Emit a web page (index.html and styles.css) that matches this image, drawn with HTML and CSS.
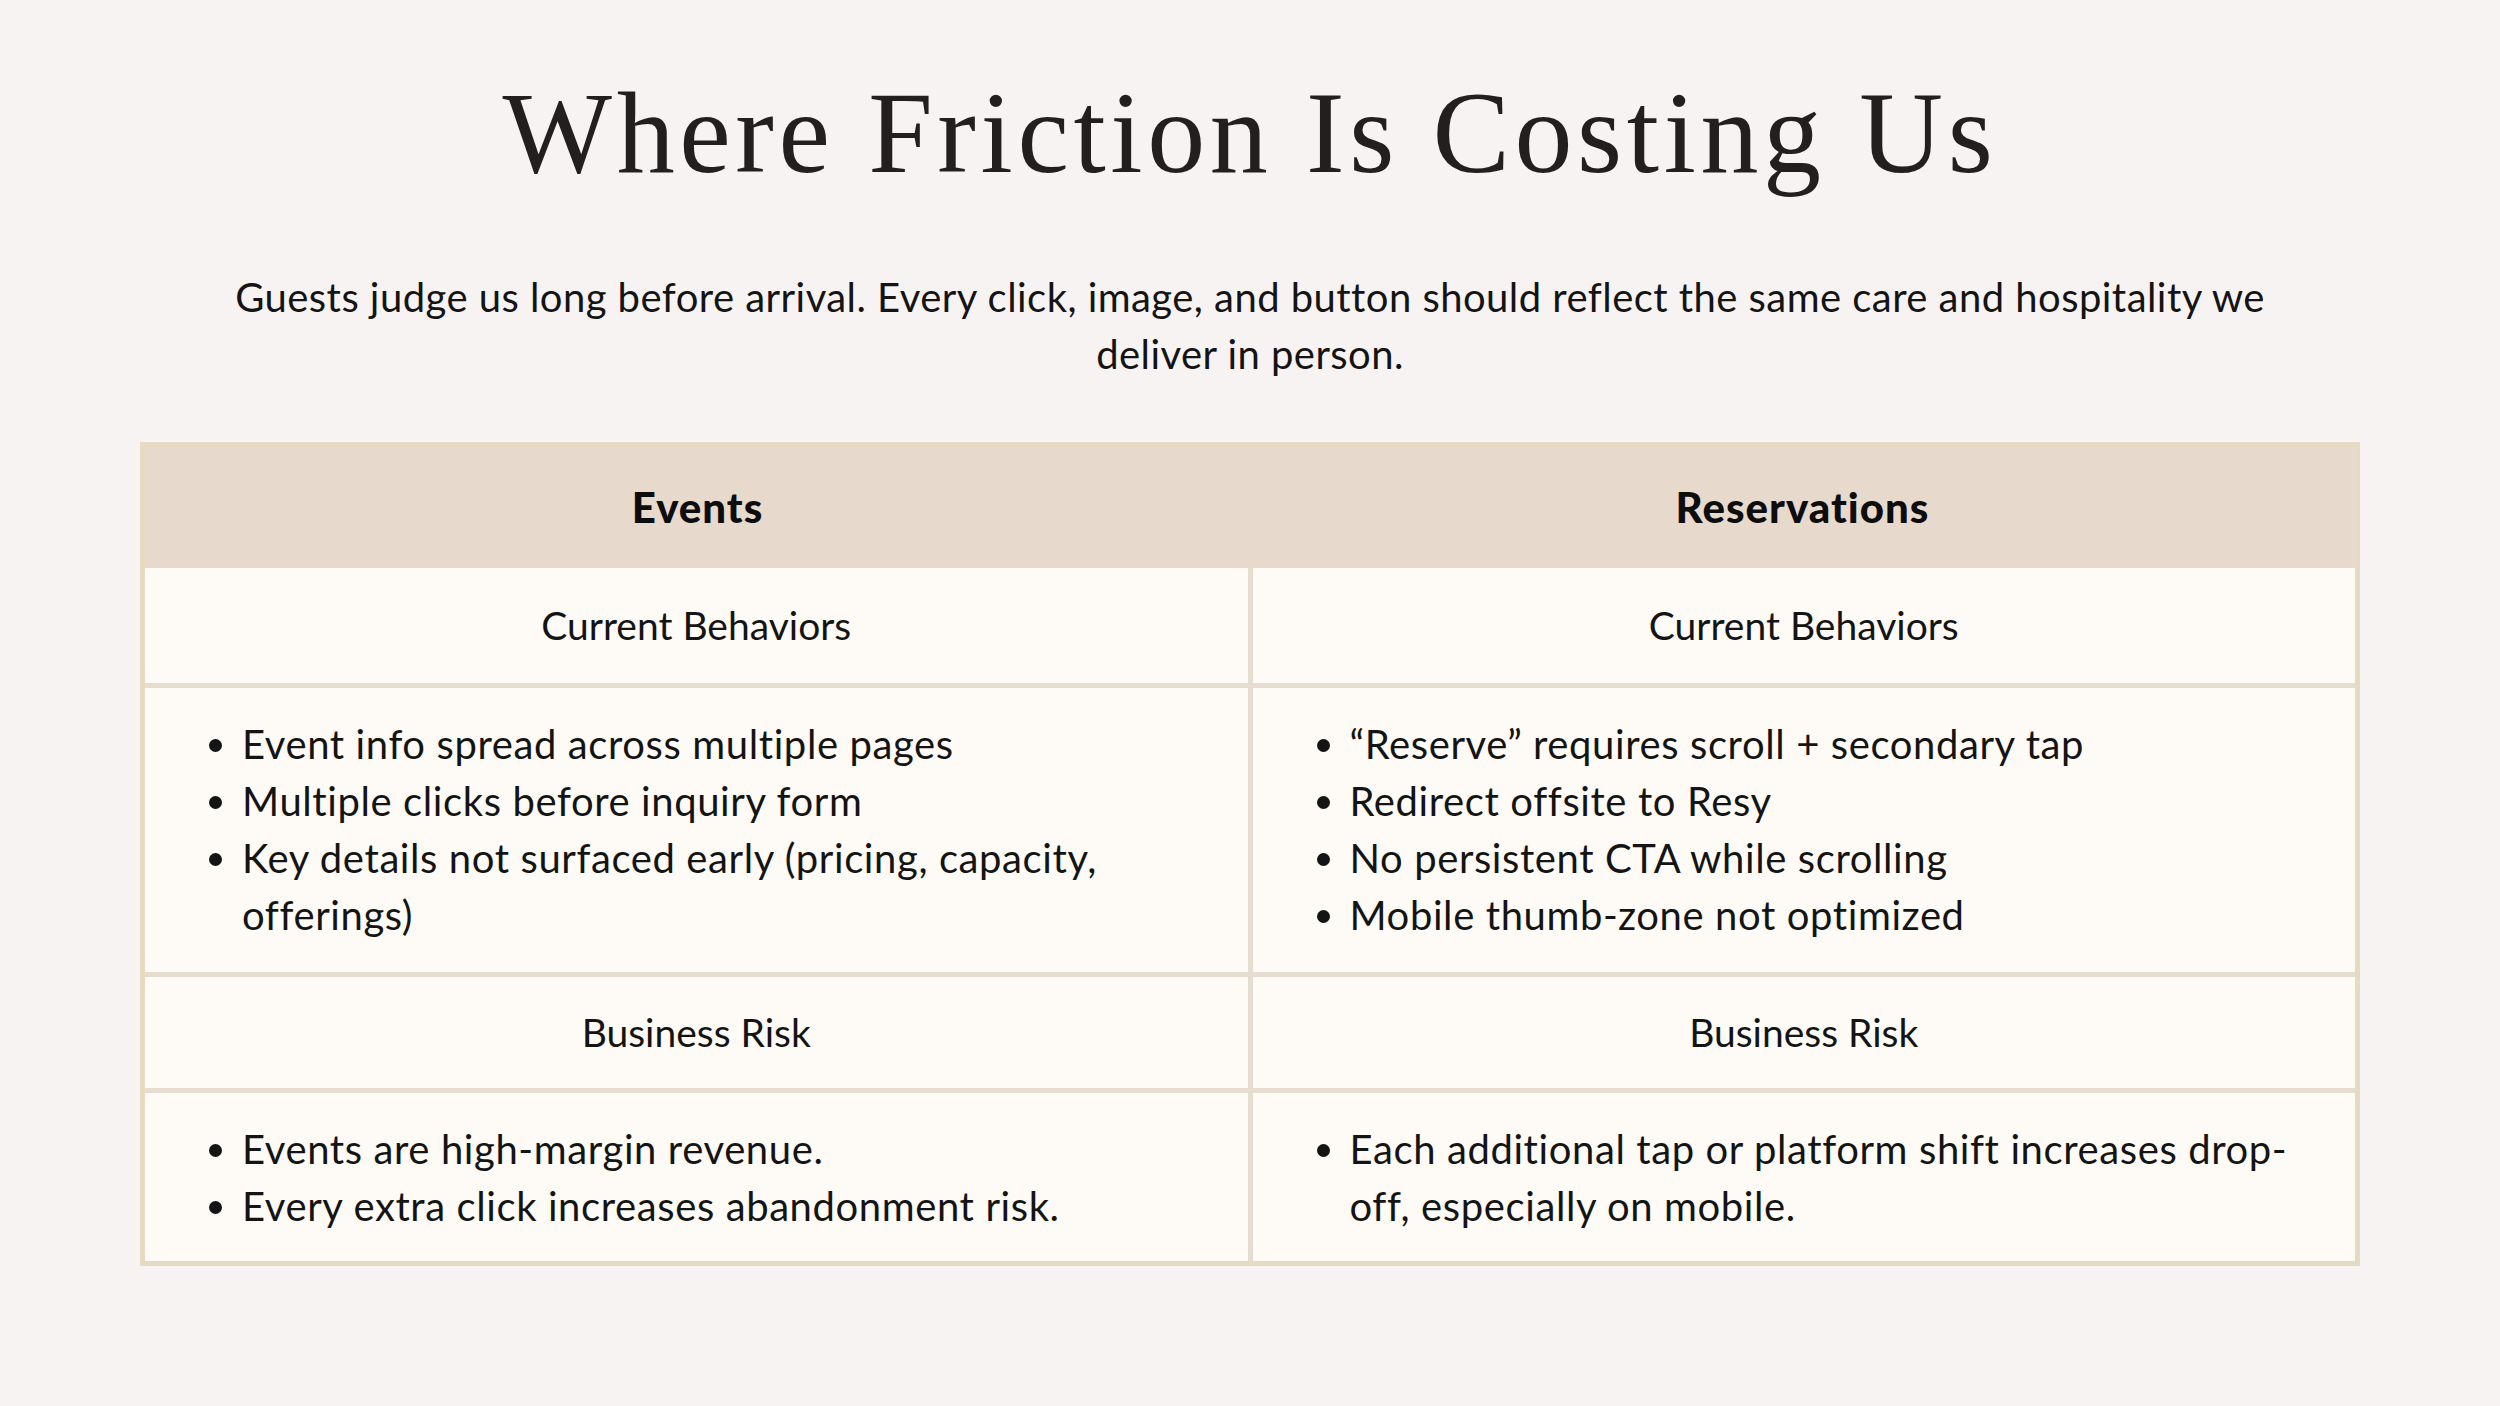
FILE: index.html
```html
<!DOCTYPE html>
<html lang="en">
<head>
<meta charset="utf-8">
<title>Where Friction Is Costing Us</title>
<link rel="stylesheet" href="styles.css">
</head>
<body>
<main class="slide">
  <h1 class="title">Where Friction Is Costing Us</h1>
  <p class="lead">Guests judge us long before arrival. Every click, image, and button should reflect the same care and hospitality we deliver in person.</p>
  <section class="table">
    <div class="head">
      <div class="head-cell">Events</div>
      <div class="head-cell">Reservations</div>
    </div>
    <div class="grid">
      <div class="cell label">Current Behaviors</div>
      <div class="cell label">Current Behaviors</div>
      <div class="cell list">
        <ul>
          <li>Event info spread across multiple pages</li>
          <li>Multiple clicks before inquiry form</li>
          <li>Key details not surfaced early (pricing, capacity, offerings)</li>
        </ul>
      </div>
      <div class="cell list">
        <ul>
          <li>“Reserve” requires scroll + secondary tap</li>
          <li>Redirect offsite to Resy</li>
          <li>No persistent CTA while scrolling</li>
          <li>Mobile thumb-zone not optimized</li>
        </ul>
      </div>
      <div class="cell label risk">Business Risk</div>
      <div class="cell label risk">Business Risk</div>
      <div class="cell list last">
        <ul>
          <li>Events are high-margin revenue.</li>
          <li>Every extra click increases abandonment risk.</li>
        </ul>
      </div>
      <div class="cell list last">
        <ul>
          <li>Each additional tap or platform shift increases drop-off, especially on mobile.</li>
        </ul>
      </div>
    </div>
  </section>
</main>
</body>
</html>
```

FILE: styles.css
```css
html, body {
  margin: 0;
  padding: 0;
}
body {
  background: #f8f3f3;
  width: 2500px;
  height: 1406px;
  overflow: hidden;
  font-family: "Lato", "Liberation Sans", sans-serif;
  color: #141414;
}
.slide {
  padding: 64px 140px 0;
  box-sizing: border-box;
}
.title {
  margin: 0;
  text-align: center;
  font-family: "Liberation Serif", "DejaVu Serif", serif;
  font-weight: 400;
  font-size: 116px;
  line-height: 138px;
  letter-spacing: 4.6px;
  color: #231f1f;
}
.lead {
  margin: 67px 60px 0;
  text-align: center;
  font-size: 40px;
  line-height: 57px;
  font-weight: 400;
  letter-spacing: 0.45px;
}
.table {
  margin-top: 59px;
  border: 5px solid #e6dbc2;
  background: #fefbf6;
}
.head {
  display: flex;
  background: #e7dacd;
}
.head-cell {
  flex: 1;
  text-align: center;
  font-weight: 900;
  font-size: 42px;
  letter-spacing: 1px;
  line-height: 57px;
  padding: 32px 0;
  color: #0d0d0d;
}
.grid {
  display: grid;
  grid-template-columns: 1fr 1fr;
  gap: 5px;
  background: #e7dcd0;
}
.cell {
  background: #fefbf6;
  font-size: 40px;
  line-height: 57px;
}
.label {
  text-align: center;
  font-size: 39px;
  padding: 29px 0;
}
.label.risk {
  padding: 27px 0;
}
.list {
  padding: 28px 40px 28px 97px;
  letter-spacing: 0.6px;
}
.list.last {
  padding-bottom: 26px;
}
.list ul {
  margin: 0;
  padding: 0;
  list-style: disc;
}
```
